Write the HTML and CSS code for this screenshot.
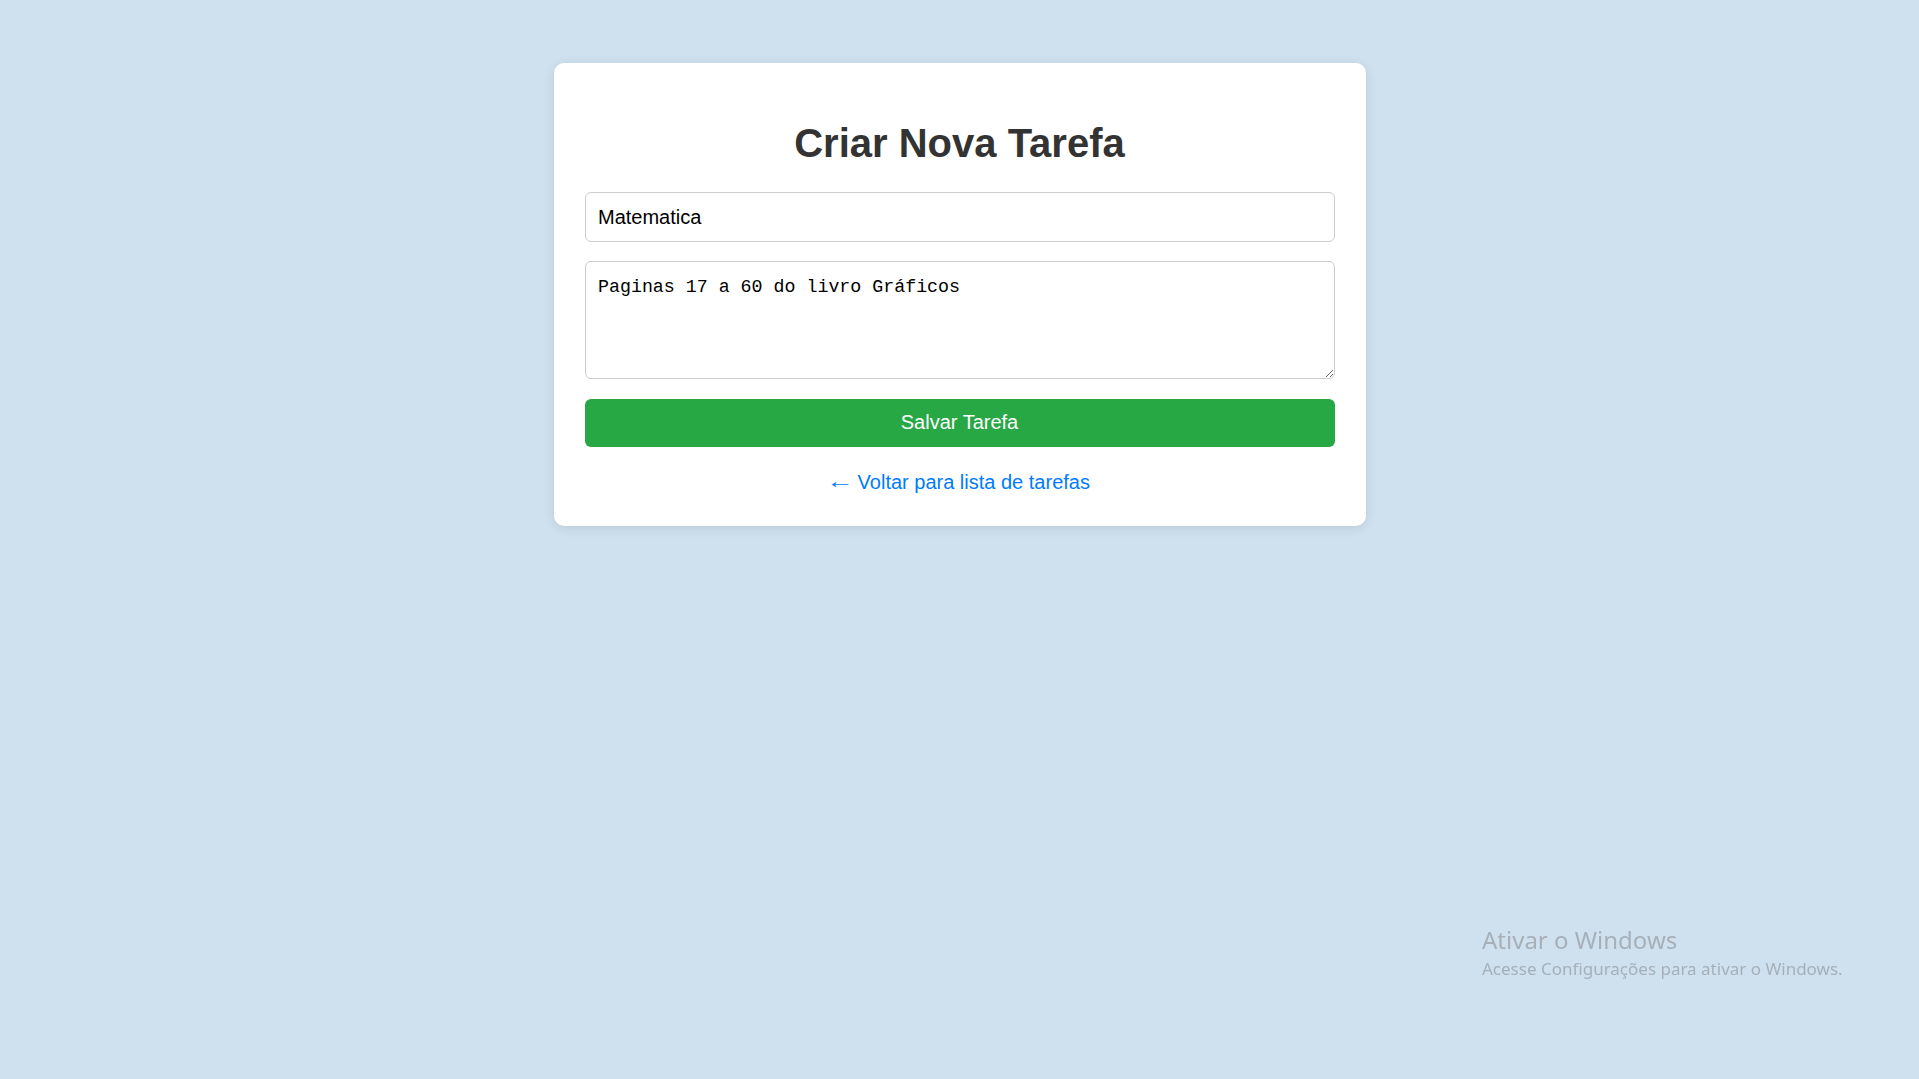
FILE: index.html
```html
<!DOCTYPE html>
<html lang="pt-BR">
<head>
<meta charset="utf-8">
<title>Criar Nova Tarefa</title>
<link rel="stylesheet" href="styles.css">
</head>
<body>
  <div class="card">
    <h1 class="title">Criar Nova Tarefa</h1>
    <form class="form">
      <input class="field" type="text" value="Matematica">
      <textarea class="area">Paginas 17 a 60 do livro Gráficos</textarea>
      <button class="save" type="button">Salvar Tarefa</button>
    </form>
    <p class="back"><a href="#" class="back-link"><span class="arrow">←</span> Voltar para lista de tarefas</a></p>
  </div>
  <div class="watermark">
    <div class="wm-title">Ativar o Windows</div>
    <div class="wm-sub">Acesse Configurações para ativar o Windows.</div>
  </div>
</body>
</html>
```

FILE: styles.css
```css
html, body {
  margin: 0;
  padding: 0;
}

body {
  background: #cfe1ef;
  font-family: "Liberation Sans", Arial, sans-serif;
  font-size: 20px;
  color: #000;
  padding: 63px 10px 10px;
  min-height: 1079px;
  box-sizing: border-box;
}

.card {
  width: 750px;
  margin: 0 auto;
  padding: 31px 31px 32px;
  background: #fff;
  border-radius: 10px;
  box-shadow: 0 2px 12px rgba(0, 0, 0, 0.1);
}

.title {
  margin: 26.5px 0 26.5px;
  font-size: 40px;
  font-weight: bold;
  color: #333;
  text-align: center;
}

.form {
  display: flex;
  flex-direction: column;
  margin: 0;
}

.field {
  display: block;
  box-sizing: border-box;
  width: 100%;
  height: 50px;
  padding: 12.5px;
  margin: 0 0 19px;
  border: 1px solid #ccc;
  border-radius: 6px;
  font-family: "Liberation Sans", Arial, sans-serif;
  font-size: 20px;
  line-height: 23px;
  color: #000;
  background: #fff;
}

.area {
  display: block;
  box-sizing: border-box;
  width: 100%;
  height: 118px;
  padding: 14px 12.5px 11px;
  margin: 0 0 19.5px;
  border: 1px solid #ccc;
  border-radius: 6px;
  font-family: "Liberation Mono", "DejaVu Sans Mono", monospace;
  font-size: 18.3px;
  line-height: 23px;
  color: #000;
  background: #fff;
  resize: vertical;
}

.save {
  display: block;
  width: 100%;
  height: 48px;
  padding: 12.5px;
  border: none;
  border-radius: 6px;
  background: #28a745;
  color: #fff;
  font-family: "Liberation Sans", Arial, sans-serif;
  font-size: 20px;
  line-height: 23px;
  cursor: pointer;
}

.back {
  margin: 24.5px 0 0;
  text-align: center;
  line-height: 23px;
}

.back-link {
  color: #007bff;
  text-decoration: none;
}

.arrow {
  display: inline-block;
  margin: 0 2px 0 1px;
  transform: scaleX(1.4) translateY(-1px);
  transform-origin: center;
}

.watermark {
  position: fixed;
  left: 1482px;
  top: 924px;
  color: #a7b0b8;
  font-family: "Noto Sans", "Open Sans", sans-serif;
}

.wm-title {
  font-size: 24px;
  line-height: 32px;
}

.wm-sub {
  font-size: 17px;
  line-height: 26px;
}
```
